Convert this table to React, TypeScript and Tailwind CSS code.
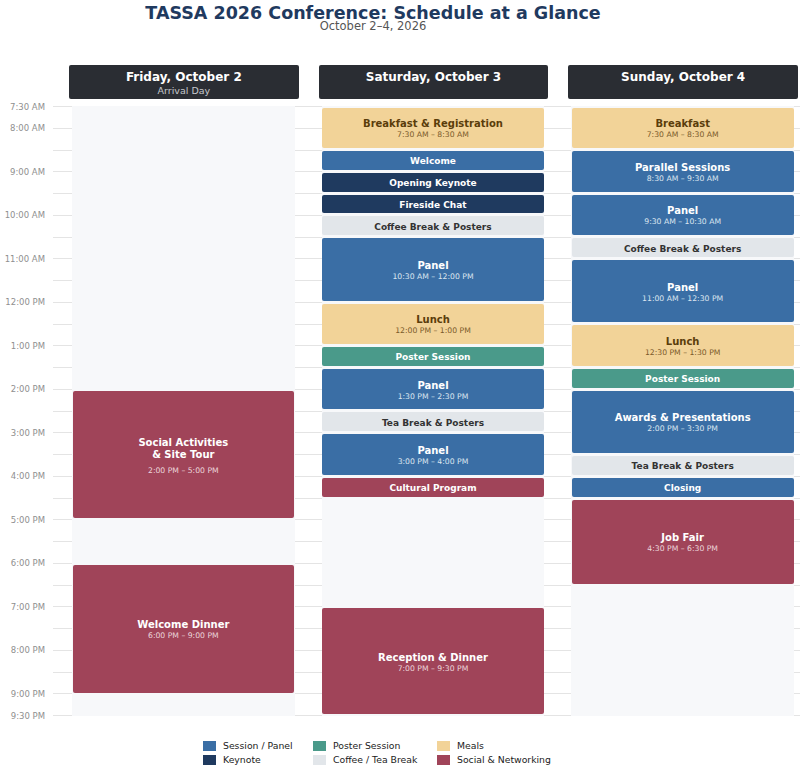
import React from "react";

type Kind = "session" | "keynote" | "poster" | "break" | "meal" | "social";

interface Evento {
  start: number;
  end: number;
  title: string;
  kind: Kind;
  time?: string;
}

// px per hour: 7:30 AM -> 9:30 PM drawn over 610px
const HOUR = 610 / 14;
const DAY_START = 7.5;
const DAY_END = 21.5;

const KIND_CLASSES: Record<Kind, string> = {
  session: "bg-[#3a6ea5] text-white",
  keynote: "bg-[#1f3a5f] text-white",
  poster: "bg-[#4a9a8a] text-white",
  break: "bg-[#e2e6ea] text-[#333333]",
  meal: "bg-[#f2d398] text-[#5a3d0b]",
  social: "bg-[#a04459] text-white",
};

const TIME_CLASSES: Record<Kind, string> = {
  session: "text-[#dde6f0]",
  keynote: "text-[#d5dce6]",
  poster: "text-[#e0efec]",
  break: "text-[#555555]",
  meal: "text-[#7a5a2a]",
  social: "text-[#ecd6db]",
};

const DAYS: { title: string; sub?: string; events: Evento[] }[] = [
  {
    title: "Friday, October 2",
    sub: "Arrival Day",
    events: [
      { start: 14, end: 17, title: "Social Activities\n& Site Tour", kind: "social", time: "2:00 PM – 5:00 PM" },
      { start: 18, end: 21, title: "Welcome Dinner", kind: "social", time: "6:00 PM – 9:00 PM" },
    ],
  },
  {
    title: "Saturday, October 3",
    events: [
      { start: 7.5, end: 8.5, title: "Breakfast & Registration", kind: "meal", time: "7:30 AM – 8:30 AM" },
      { start: 8.5, end: 9, title: "Welcome", kind: "session" },
      { start: 9, end: 9.5, title: "Opening Keynote", kind: "keynote" },
      { start: 9.5, end: 10, title: "Fireside Chat", kind: "keynote" },
      { start: 10, end: 10.5, title: "Coffee Break & Posters", kind: "break" },
      { start: 10.5, end: 12, title: "Panel", kind: "session", time: "10:30 AM – 12:00 PM" },
      { start: 12, end: 13, title: "Lunch", kind: "meal", time: "12:00 PM – 1:00 PM" },
      { start: 13, end: 13.5, title: "Poster Session", kind: "poster" },
      { start: 13.5, end: 14.5, title: "Panel", kind: "session", time: "1:30 PM – 2:30 PM" },
      { start: 14.5, end: 15, title: "Tea Break & Posters", kind: "break" },
      { start: 15, end: 16, title: "Panel", kind: "session", time: "3:00 PM – 4:00 PM" },
      { start: 16, end: 16.5, title: "Cultural Program", kind: "social" },
      { start: 19, end: 21.5, title: "Reception & Dinner", kind: "social", time: "7:00 PM – 9:30 PM" },
    ],
  },
  {
    title: "Sunday, October 4",
    events: [
      { start: 7.5, end: 8.5, title: "Breakfast", kind: "meal", time: "7:30 AM – 8:30 AM" },
      { start: 8.5, end: 9.5, title: "Parallel Sessions", kind: "session", time: "8:30 AM – 9:30 AM" },
      { start: 9.5, end: 10.5, title: "Panel", kind: "session", time: "9:30 AM – 10:30 AM" },
      { start: 10.5, end: 11, title: "Coffee Break & Posters", kind: "break" },
      { start: 11, end: 12.5, title: "Panel", kind: "session", time: "11:00 AM – 12:30 PM" },
      { start: 12.5, end: 13.5, title: "Lunch", kind: "meal", time: "12:30 PM – 1:30 PM" },
      { start: 13.5, end: 14, title: "Poster Session", kind: "poster" },
      { start: 14, end: 15.5, title: "Awards & Presentations", kind: "session", time: "2:00 PM – 3:30 PM" },
      { start: 15.5, end: 16, title: "Tea Break & Posters", kind: "break" },
      { start: 16, end: 16.5, title: "Closing", kind: "session" },
      { start: 16.5, end: 18.5, title: "Job Fair", kind: "social", time: "4:30 PM – 6:30 PM" },
    ],
  },
];

const LEGEND: { label: string; cls: string }[][] = [
  [
    { label: "Session / Panel", cls: "bg-[#3a6ea5]" },
    { label: "Keynote", cls: "bg-[#1f3a5f]" },
  ],
  [
    { label: "Poster Session", cls: "bg-[#4a9a8a]" },
    { label: "Coffee / Tea Break", cls: "bg-[#e2e6ea]" },
  ],
  [
    { label: "Meals", cls: "bg-[#f2d398]" },
    { label: "Social & Networking", cls: "bg-[#a04459]" },
  ],
];

function tickLabel(i: number) {
  if (i === 0) return "7:30 AM";
  if (i === 28) return "9:30 PM";
  if (i % 2 === 0) return "";
  const h = 8 + (i - 1) / 2;
  const h12 = h > 12 ? h - 12 : h;
  return `${h12}:00 ${h >= 12 ? "PM" : "AM"}`;
}

function Bloque({ ev }: { ev: Evento }) {
  const big = !!ev.time;
  return (
    <div style={{ height: (ev.end - ev.start) * HOUR }} className="py-[1.5px] px-[0.5px]">
      <div
        className={`h-full pt-[3px] rounded-[2px] flex flex-col items-center justify-center text-center ${KIND_CLASSES[ev.kind]}`}
      >
        <div
          className={`font-bold whitespace-pre-line ${big ? "text-[10px] leading-[12px]" : "text-[9px] leading-[11px]"}`}
        >
          {ev.title}
        </div>
        {ev.time && (
          <div
            className={`text-[7.7px] leading-[10px] ${ev.title.includes("\n") ? "mt-[5px]" : ""} ${TIME_CLASSES[ev.kind]}`}
          >
            {ev.time}
          </div>
        )}
      </div>
    </div>
  );
}

function Columna({ events }: { events: Evento[] }) {
  const partes: React.ReactNode[] = [];
  let cursor = DAY_START;
  events.forEach((ev, i) => {
    if (ev.start > cursor) {
      partes.push(<div key={`g${i}`} style={{ height: (ev.start - cursor) * HOUR }} />);
    }
    partes.push(<Bloque key={i} ev={ev} />);
    cursor = ev.end;
  });
  if (cursor < DAY_END) {
    partes.push(<div key="fin" style={{ height: (DAY_END - cursor) * HOUR }} />);
  }
  return <div className="bg-[#f7f8fa] flex flex-col">{partes}</div>;
}

export default function App() {
  return (
    <div className="w-[800px] h-[772px] bg-white overflow-hidden font-['DejaVu_Sans',sans-serif]">
      <div className="h-[65px] pr-[54px] pt-[3px] flex flex-col items-center">
        <div className="text-[17.5px] leading-[20px] font-bold text-[#1f3a5f]">
          TASSA 2026 Conference: Schedule at a Glance
        </div>
        <div className="-mt-[4px] text-[11.5px] leading-[14px] text-[#555555]">October 2–4, 2026</div>
      </div>

      <div className="h-[34px] pl-[69px] pr-[2px] grid grid-cols-3 gap-[20px]">
        {DAYS.map((d) => (
          <div
            key={d.title}
            className="bg-[#2a2d33] rounded-[2px] pt-[5px] flex flex-col items-center text-white"
          >
            <div className="text-[12px] leading-[14px] font-bold">{d.title}</div>
            {d.sub && <div className="text-[9.5px] leading-[13px] text-[#c5c8cc]">{d.sub}</div>}
          </div>
        ))}
      </div>

      <div className="relative mt-[7px] h-[610px]">
        <div className="absolute inset-0 flex flex-col justify-between">
          {Array.from({ length: 29 }, (_, i) => (
            <div key={i} className="h-px flex items-center">
              <div className="w-[53px] pr-[8px] text-right text-[8.5px] leading-[10px] text-[#8f8f8f]">
                {tickLabel(i)}
              </div>
              <div className="flex-1 h-px bg-[#e4e4e4]" />
            </div>
          ))}
        </div>
        <div className="relative h-full pl-[72px] pr-[6px] grid grid-cols-3 gap-[27px]">
          {DAYS.map((d) => (
            <Columna key={d.title} events={d.events} />
          ))}
        </div>
      </div>

      <div className="mt-[23px] pl-[203px] flex text-[9.3px] leading-[14px] text-[#222222]">
        {LEGEND.map((col, ci) => (
          <div key={ci} className={ci === 0 ? "w-[110px]" : ci === 1 ? "w-[124px]" : ""}>
            {col.map((item) => (
              <div key={item.label} className="flex items-center gap-[7px]">
                <span className={`w-[13px] h-[10px] ${item.cls}`} />
                <span>{item.label}</span>
              </div>
            ))}
          </div>
        ))}
      </div>
    </div>
  );
}
